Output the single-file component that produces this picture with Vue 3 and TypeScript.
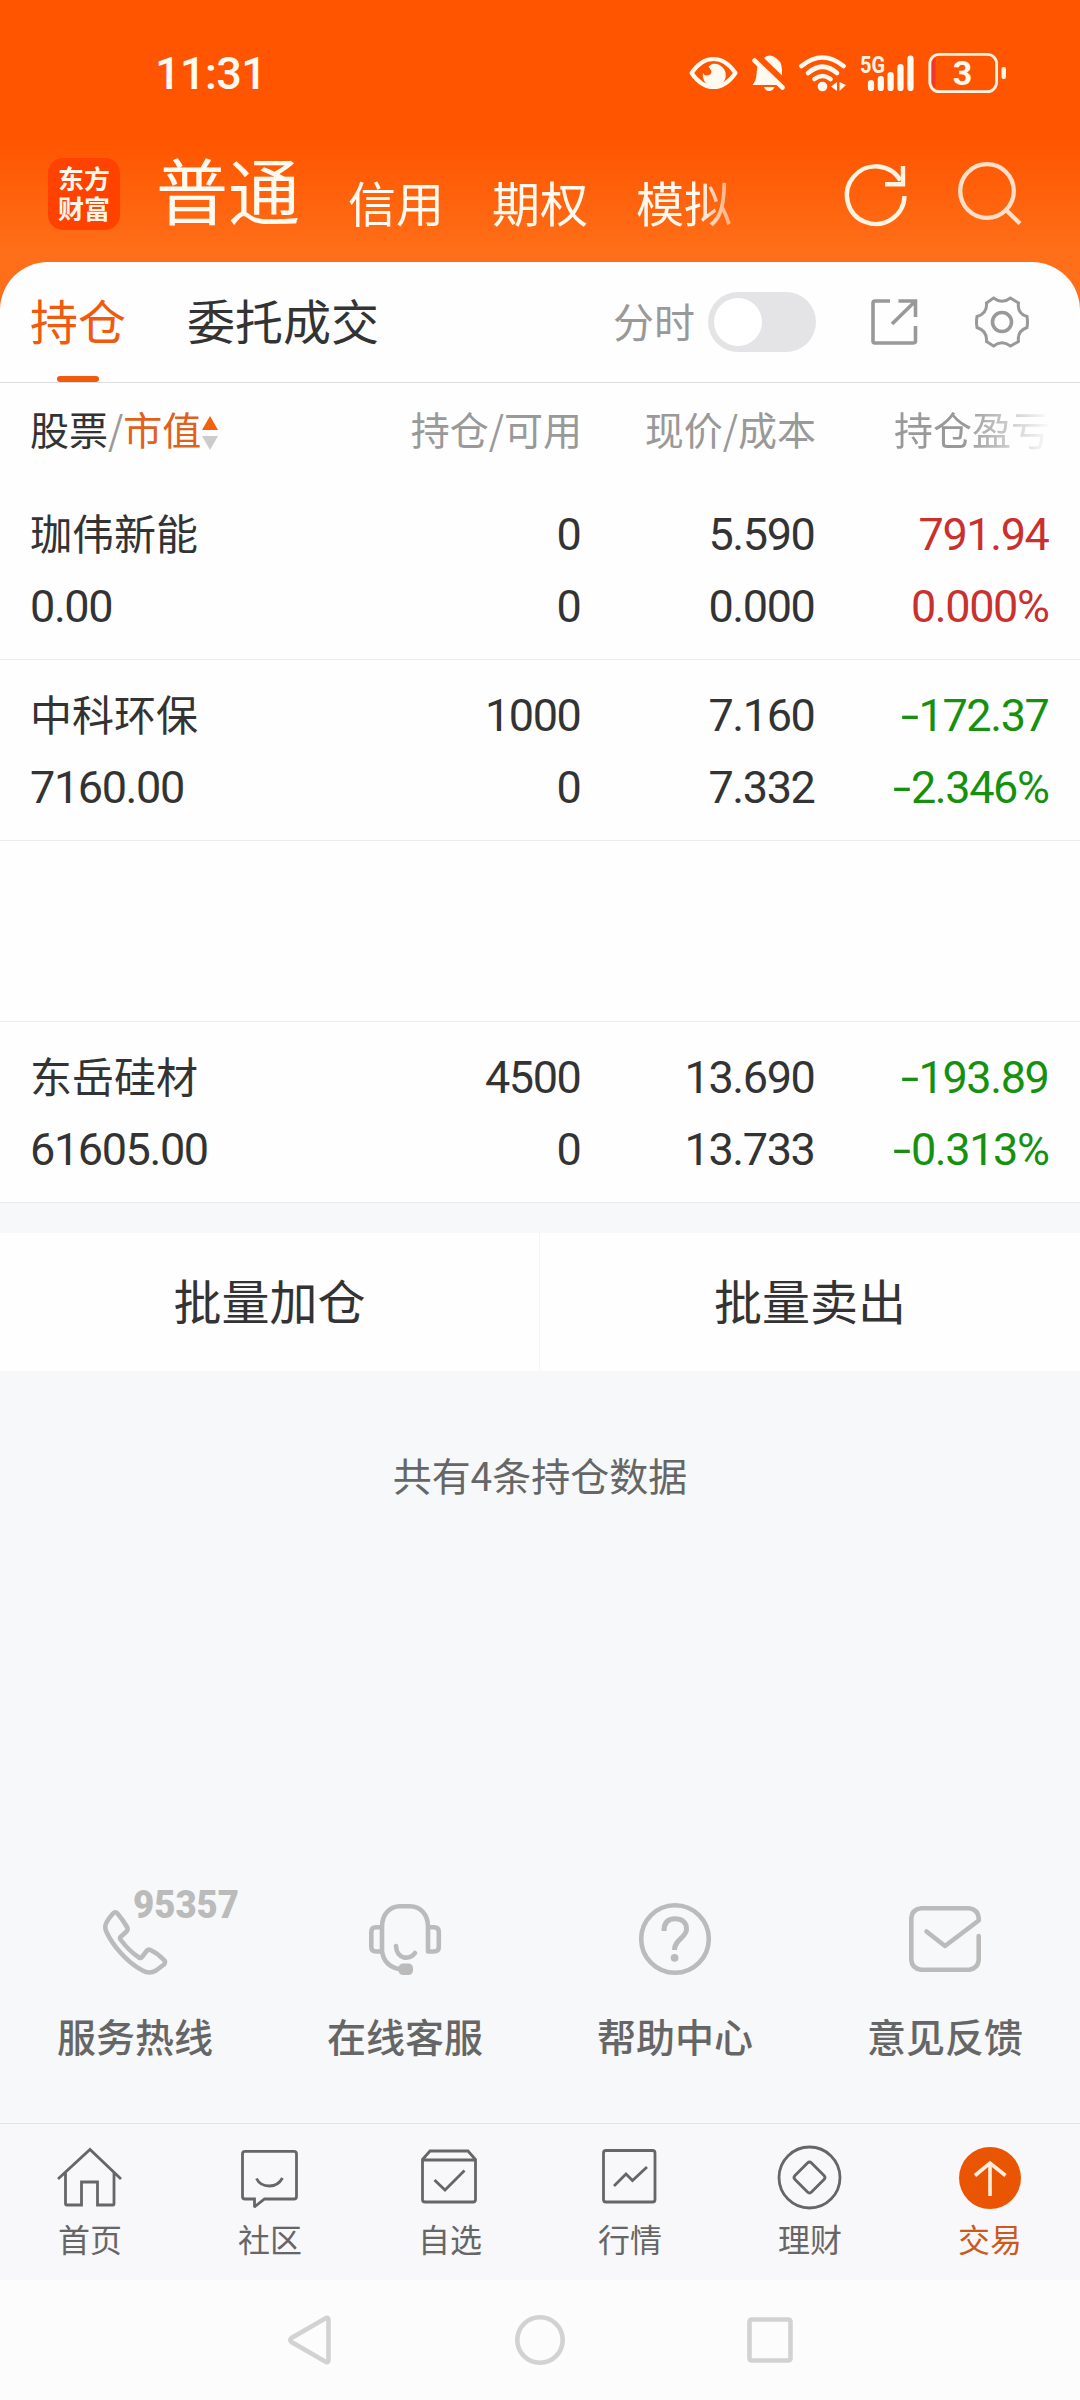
<script setup lang="ts">
interface Holding {
  name: string
  value: string
  amount: string
  available: string
  price: string
  cost: string
  profit: string
  ratio: string
  trend: 'up' | 'down'
}

const holdings: (Holding | null)[] = [
  { name: '珈伟新能', value: '0.00', amount: '0', available: '0', price: '5.590', cost: '0.000', profit: '791.94', ratio: '0.000%', trend: 'up' },
  { name: '中科环保', value: '7160.00', amount: '1000', available: '0', price: '7.160', cost: '7.332', profit: '172.37', ratio: '2.346%', trend: 'down' },
  null,
  { name: '东岳硅材', value: '61605.00', amount: '4500', available: '0', price: '13.690', cost: '13.733', profit: '193.89', ratio: '0.313%', trend: 'down' },
]

const accounts: string[] = ['信用', '期权', '模拟']
</script>

<template>
  <div class="screen">
    <header class="top">
      <div class="status">
        <span class="clock">11:31</span>
        <div class="status-icons">
          <svg width="52" height="46" viewBox="688 50 52 46">
            <path d="M691.5 73 C698 63.500 706 59 713.500 59 C721 59 729 63.500 735.500 73 C729 82.500 721 87 713.500 87 C706 87 698 82.500 691.500 73Z" fill="none" stroke="#fffaf0" stroke-width="4" stroke-linejoin="round" />
            <path d="M712 64 A11.500 11.500 0 1 1 703 73 Q704 75.500 707 75.500 Q711.500 75 711.500 71 L708.500 66.500Z" fill="#fffaf0" />
          </svg>
          <svg width="37" height="46" viewBox="750 50 37 46">
            <path d="M757.500 65 L778 85 H752.500 Q756.500 80 756.500 74Z M764 58 Q768 54.500 772.500 56 Q782 60 782 70 V75.500Z M764 87 H774.500 Q773 91 769 91 Q765.500 91 764 87Z" fill="#fffaf0" />
            <path d="M754.500 60.500 L782.500 87.500" stroke="#fffaf0" stroke-width="4.600" stroke-linecap="round" />
          </svg>
          <svg width="52" height="46" viewBox="797 50 52 46">
            <g fill="none" stroke="#fffaf0" stroke-width="4.600" stroke-linecap="round">
              <path d="M801.500 66 Q822.500 49 843.500 66" />
              <path d="M808 73 Q822.500 60.500 837 73" />
              <path d="M814.500 79 Q822.500 73 830.500 79" />
            </g>
            <circle cx="822.500" cy="86.500" r="4.800" fill="#fffaf0" />
            <path d="M831 86.500 L837 82 V91Z M839.500 82 L846 85 L839.500 91Z" fill="#fffaf0" />
          </svg>
          <svg width="57" height="46" viewBox="859 50 57 46">
            <text x="860" y="73" class="net" textLength="25" lengthAdjust="spacingAndGlyphs">5G</text>
            <g stroke="#fffaf0" stroke-width="6.200" stroke-linecap="round">
              <path d="M871 83 V88 M880.800 79 V88 M890.600 75 V88 M900.500 67 V88 M910.500 58.500 V88" />
            </g>
          </svg>
          <svg width="81" height="46" viewBox="926 50 81 46">
            <path d="M935.500 58 V88 Q932 86 932 82 V64 Q932 60 935.500 58Z" fill="#f4352c" />
            <rect x="929.800" y="54.300" width="66.800" height="37.400" rx="9.500" fill="none" stroke="#fff3e4" stroke-width="2.800" />
            <rect x="1001.500" y="67" width="4.500" height="12" rx="2" fill="#fff3e4" />
            <text x="962.500" y="85" class="level" text-anchor="middle">3</text>
          </svg>
        </div>
      </div>
      <div class="nav">
        <div class="logo">东方<br>财富</div>
        <div class="accounts">
          <span class="account current">普通</span>
          <span v-for="a in accounts" :key="a" class="account">{{ a }}</span>
        </div>
        <svg class="refresh" width="70" height="70" viewBox="841 160 70 70" fill="none" stroke="#fff3e2" stroke-width="4.400">
          <path d="M904.500 196 A28.800 28.800 0 1 1 900.500 180.500" />
          <path d="M903 166 V184.200 H885" />
        </svg>
        <svg width="70" height="70" viewBox="954 158 70 70" fill="none" stroke="#ffdfc8" stroke-width="4.300">
          <circle cx="987" cy="191" r="26.800" />
          <path d="M1006 210 L1020 223.500" />
        </svg>
      </div>
    </header>

    <section class="card">
      <div class="tabs">
        <span class="tab active">持仓</span>
        <span class="tab">委托成交</span>
        <span class="minute">分时</span>
        <span class="switch"><i></i></span>
        <svg class="share" width="54" height="54" viewBox="867 295 54 54" fill="none" stroke="#999" stroke-width="3.600">
          <path d="M890 301 H875 Q873 301 873 303 V341 Q873 343 875 343 H913 Q915.500 343 915.500 341 V326 M898.500 301 H915.500 V317 M915 301.500 L892 324" />
        </svg>
        <svg width="60" height="60" viewBox="972 292 60 60" fill="none" stroke="#999" stroke-width="3">
          <path d="M986.500 303 L993.500 298 Q1002 304.500 1010.500 298 L1018.500 303 Q1017 313.500 1027 316.500 Q1028 322 1027 327.500 Q1017 331 1018.500 341.500 L1010.500 346 Q1002 339.500 993.500 346 L986.500 341.500 Q987.500 331 977 327.500 Q976 322 977 316.500 Q987.500 313.500 986.500 303Z" />
          <circle cx="1002" cy="322" r="9.500" stroke-width="3.600" />
        </svg>
      </div>

      <div class="grid head">
        <div class="first">
          <span class="dark">股票</span><span>/</span><span class="hot">市值</span>
          <svg width="16" height="34" viewBox="0 0 16 34">
            <path d="M8 0 L16 14 H0Z" fill="#f5600f" />
            <path d="M8 34 L16 20 H0Z" fill="#ccc" />
          </svg>
        </div>
        <span>持仓/可用</span>
        <span>现价/成本</span>
        <span class="fade">持仓盈亏</span>
      </div>

      <div v-for="(h, i) in holdings" :key="i" class="grid row">
        <template v-if="h">
          <div class="cell left"><span class="name">{{ h.name }}</span><span>{{ h.value }}</span></div>
          <div class="cell"><span>{{ h.amount }}</span><span>{{ h.available }}</span></div>
          <div class="cell"><span>{{ h.price }}</span><span>{{ h.cost }}</span></div>
          <div class="cell" :class="h.trend">
            <span><b v-if="h.trend === 'down'" class="sign">-</b>{{ h.profit }}</span>
            <span><b v-if="h.trend === 'down'" class="sign">-</b>{{ h.ratio }}</span>
          </div>
        </template>
      </div>
    </section>

    <div class="batch">
      <button>批量加仓</button>
      <button>批量卖出</button>
    </div>
    <p class="count">共有4条持仓数据</p>

    <div class="services">
      <div class="service">
        <svg class="phone" width="230" height="106" viewBox="20 1874 230 106" fill="none" stroke="#bbb" stroke-width="4.600" stroke-linejoin="round">
          <path d="M113 1913.500 Q115.300 1911 117.500 1913.500 Q123 1920 127 1927 Q128.500 1929.500 126.500 1931.500 L120.500 1937 Q119.500 1938 120.500 1939.500 Q129 1951 139 1957.500 Q140.500 1958.500 142 1957 L147 1950.500 Q148.500 1949 150.500 1950 Q158 1953.500 164 1960 Q166 1962 164 1964.500 L156 1970.500 Q149.500 1974.500 142.500 1970.500 C126 1962 112 1944 106.500 1932 Q104 1927 106.500 1922.500 Q108.500 1918.500 113 1913.500Z" />
          <text x="133" y="1918" class="hotline" textLength="106" lengthAdjust="spacingAndGlyphs">95357</text>
        </svg>
        <span>服务热线</span>
      </div>
      <div class="service">
        <svg width="92" height="92" viewBox="359 1888 92 92" fill="none" stroke="#bbb" stroke-width="4.600" stroke-linecap="round" stroke-linejoin="round">
          <path d="M382 1927 V1951 Q384 1966 399 1969 M382 1927 C382 1914 390 1906.300 400 1906.300 H410 C420 1906.300 428 1914 428 1927 V1951.500 H434 Q438.800 1951.500 438.800 1947 V1932 Q438.800 1927.300 434 1927.300 H429 M381 1927.300 H376 Q371.300 1927.300 371.300 1932 V1947 Q371.300 1951.500 376 1951.500 H381" />
          <path d="M396 1946 Q396.500 1955.500 404 1957.500 Q411 1958.500 415 1953" />
          <rect x="398.500" y="1963.500" width="14.500" height="11.500" rx="4.500" fill="#bbb" stroke="none" />
        </svg>
        <span>在线客服</span>
      </div>
      <div class="service">
        <svg width="92" height="92" viewBox="629 1888 92 92" fill="none" stroke="#bbb" stroke-width="4.600">
          <circle cx="675" cy="1939" r="33.800" />
          <path d="M664 1931 C664 1922.500 668 1918.800 675 1918.800 C682 1918.800 686.500 1922.500 686.500 1929 C686.500 1938 674.500 1939 674.500 1950" stroke-width="5" />
          <circle cx="674.600" cy="1957.800" r="3.900" fill="#bbb" stroke="none" />
        </svg>
        <span>帮助中心</span>
      </div>
      <div class="service">
        <svg width="92" height="92" viewBox="899 1888 92 92" fill="none" stroke="#bbb" stroke-width="4.600" stroke-linecap="round" stroke-linejoin="round">
          <path d="M926.500 1931.500 L945 1946 L978.700 1920.500 V1918 Q978 1909.500 969 1908.300 H921 Q912 1909.500 911.300 1918 V1960 Q912 1968.500 921 1969.700 H969 Q978 1968.500 978.700 1960 V1936" />
        </svg>
        <span>意见反馈</span>
      </div>
    </div>

    <nav class="bottom">
      <div class="item">
        <svg width="70" height="70" viewBox="55 2143 70 70"><path d="M58 2179 L90 2149.500 L121 2179 M65.500 2173 V2203.500 Q65.500 2205 67 2205 H81.500 V2182 H97.500 V2205 H113 Q114 2205 114 2203.500 V2173" /></svg>
        <span>首页</span>
      </div>
      <div class="item">
        <svg width="70" height="70" viewBox="235 2143 70 70"><path d="M245 2151.300 H294 Q296.500 2151.300 296.500 2154 V2196.500 Q296.500 2199 294 2199 H264.500 L255 2206.500 Q254.500 2207 254.500 2206 V2199 H245 Q242.500 2199 242.500 2196.500 V2154 Q242.500 2151.300 245 2151.300Z M256.500 2178.500 Q260 2186 269.500 2186 Q278 2186 282.500 2178" /></svg>
        <span>社区</span>
      </div>
      <div class="item">
        <svg width="70" height="70" viewBox="415 2143 70 70"><path d="M422.500 2159.500 L430 2151 H468 L475.500 2159.500 V2199.500 Q475.500 2202 473 2202 H425 Q422.500 2202 422.500 2199.500Z M422.500 2160 H475.500 M434.500 2180 L445 2190 L464.500 2170.500" /></svg>
        <span>自选</span>
      </div>
      <div class="item">
        <svg width="70" height="70" viewBox="595 2143 70 70"><rect x="603.500" y="2150.500" width="51.500" height="51.500" rx="2.500" /><path d="M614 2186 L626 2174 L632.500 2180.500 L647 2167" /></svg>
        <span>行情</span>
      </div>
      <div class="item">
        <svg width="70" height="70" viewBox="775 2143 70 70"><circle cx="809.500" cy="2177.500" r="30.500" /><path d="M807.500 2163 Q809.500 2161 811.500 2163 L824 2175.500 Q826 2177.500 824 2179.500 L811.500 2192 Q809.500 2194 807.500 2192 L795 2179.500 Q793 2177.500 795 2175.500Z" /></svg>
        <span>理财</span>
      </div>
      <div class="item on">
        <svg width="70" height="70" viewBox="955 2143 70 70"><circle cx="990" cy="2178" r="31" fill="#ea5504" stroke="none" /><path d="M990 2196 V2163.500 M975 2175.500 L990 2163 L1005.500 2175.500" stroke="#ffeedd" stroke-width="3.600" /></svg>
        <span>交易</span>
      </div>
    </nav>

    <div class="system">
      <svg width="50" height="60" viewBox="284 2310 50 60"><path d="M325 2318 Q327.500 2317 327.500 2320 V2360 Q327.500 2363 325 2362 L290.500 2342 Q288 2340 290.500 2338Z" /></svg>
      <svg width="60" height="60" viewBox="510 2310 60 60"><circle cx="540" cy="2340" r="22.700" /></svg>
      <svg width="50" height="60" viewBox="744 2310 50 60"><rect x="748.500" y="2319.500" width="41" height="41" rx="2" /></svg>
    </div>
  </div>
</template>

<style>
body {
  margin: 0;
}
</style>

<style scoped>
.screen {
  width: 1080px;
  height: 2400px;
  display: flex;
  flex-direction: column;
  background: #f7f8fa;
  font-family: "Noto Sans CJK SC", sans-serif;
  overflow: hidden;
}
svg {
  display: block;
  flex: none;
}
.top {
  flex: none;
  height: 322px;
  background: linear-gradient(#ff5500 140px, #ff6e18 250px);
}
.status {
  height: 144px;
  display: flex;
  justify-content: space-between;
  padding: 50px 73px 0 155px;
  box-sizing: border-box;
  color: #fffaf0;
}
.clock {
  font: 500 45px/48px Roboto, sans-serif;
  letter-spacing: -0.6px;
}
.status-icons {
  display: flex;
  gap: 10px;
}
.net {
  font: 700 24px Roboto, sans-serif;
  fill: #fff3e4;
}
.level {
  font: 700 34px Roboto, sans-serif;
  fill: #fffaf0;
}
.nav {
  display: flex;
  align-items: flex-start;
}
.logo {
  width: 72px;
  height: 72px;
  margin: 14px 0 0 48px;
  padding-top: 5px;
  box-sizing: border-box;
  border-radius: 15px;
  background: #ff4200;
  color: #fff6ea;
  font-weight: 700;
  font-size: 26px;
  line-height: 30px;
  text-align: center;
}
.accounts {
  display: flex;
  width: 605px;
  margin-left: 36px;
  gap: 48px;
  white-space: nowrap;
  color: #fffaf0;
  mask-image: linear-gradient(90deg, #000 542px, transparent 605px);
}
.account {
  font-size: 48px;
  line-height: 70px;
  margin-top: 22px;
}
.account.current {
  font-size: 72px;
  line-height: 90px;
  margin-top: -1px;
}
.refresh {
  margin: 16px 43px 0 80px;
}
.refresh + svg {
  margin-top: 14px;
}
.card {
  flex: none;
  margin-top: -60px;
  background: #fefefe;
  border-radius: 48px 48px 0 0;
}
.tabs {
  height: 121px;
  box-sizing: border-box;
  border-bottom: 1px solid #ddd;
  display: flex;
  align-items: center;
  padding: 0 48px 0 30px;
}
.tab {
  font-size: 48px;
  line-height: 114px;
  height: 120px;
  color: #333;
}
.tab.active {
  color: #f05a0e;
  margin-right: 61px;
  display: flex;
  flex-direction: column;
  align-items: center;
}
.tab.active::after {
  content: "";
  width: 42px;
  height: 6px;
  border-radius: 3px;
  background: #f05a0e;
}
.minute {
  margin-left: auto;
  font-size: 41px;
  line-height: 116px;
  height: 120px;
  color: #999;
}
.switch {
  width: 108px;
  height: 60px;
  padding: 6px;
  box-sizing: border-box;
  border-radius: 30px;
  margin-left: 13px;
  background: #e4e4e6;
}
.switch i {
  display: block;
  width: 48px;
  height: 48px;
  border-radius: 50%;
  background: #fff;
}
.share {
  margin: 0 51px;
}
.grid {
  display: grid;
  grid-template-columns: 318px 234px 234px 234px;
  padding: 0 30px;
}
.head {
  height: 96px;
  line-height: 91px;
  font-size: 39px;
  color: #999;
  text-align: right;
}
.first {
  display: flex;
}
.first svg {
  margin: 33px 0 0 1px;
}
.dark {
  color: #333;
}
.hot {
  color: #e0601c;
}
.fade {
  width: 156px;
  justify-self: end;
  mask-image: linear-gradient(90deg, #000 70px, transparent 158px);
}
.row {
  height: 181px;
  box-sizing: border-box;
  border-bottom: 1px solid #ebebeb;
  font: 45px/72px Roboto, sans-serif;
  letter-spacing: -1.4px;
  color: #333;
}
.cell {
  display: flex;
  flex-direction: column;
  align-items: flex-end;
  padding: 20px 1.5px 0 0;
}
.cell.left {
  align-items: flex-start;
}
.name {
  font: 42px/65px "Noto Sans CJK SC", sans-serif;
  letter-spacing: 0;
  height: 72px;
}
.sign {
  display: inline-block;
  width: 18px;
  font-weight: 400;
  letter-spacing: 0;
  text-align: center;
  transform: scaleX(1.45);
}
.up {
  color: #c9302e;
}
.down {
  color: #16910f;
}
.batch {
  flex: none;
  display: flex;
  height: 138px;
  margin-top: 30px;
  background: #fefefe;
}
.batch button {
  width: 540px;
  box-sizing: border-box;
  border: 0;
  padding: 0 0 6px;
  background: none;
  font: 48px "Noto Sans CJK SC", sans-serif;
  color: #333;
}
.batch button:first-child {
  border-right: 1px solid #f4f4f6;
}
.count {
  margin: 75px 0 0;
  text-align: center;
  font-size: 39px;
  line-height: 56px;
  color: #666;
}
.services {
  display: flex;
  margin-top: auto;
  height: 235px;
}
.service {
  width: 270px;
  display: flex;
  flex-direction: column;
  align-items: center;
  font-size: 39px;
  line-height: 56px;
  font-weight: 500;
  color: #666;
}
.service span {
  margin-top: 27px;
}
.phone {
  margin-top: -14px;
}
.hotline {
  font: 900 38px Roboto, sans-serif;
  fill: #bbb;
  stroke: none;
}
.bottom {
  flex: none;
  height: 157px;
  box-sizing: border-box;
  border-top: 1px solid #e2e3e5;
  background: #f8f8fa;
  display: flex;
}
.item {
  width: 180px;
  display: flex;
  flex-direction: column;
  align-items: center;
  padding-top: 19px;
  box-sizing: border-box;
  font-size: 32px;
  line-height: 50px;
  color: #666;
}
.item svg {
  fill: none;
  stroke: #666;
  stroke-width: 2.8;
}
.item.on {
  color: #cc5a1c;
}
.system {
  flex: none;
  height: 120px;
  background: #fcfcfc;
  display: flex;
  align-items: center;
  gap: 175px;
  padding-left: 285px;
  box-sizing: border-box;
}
.system svg {
  fill: none;
  stroke: #d2d2d2;
  stroke-width: 4.6;
}
</style>
